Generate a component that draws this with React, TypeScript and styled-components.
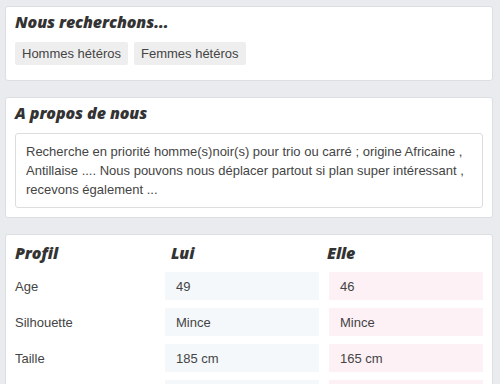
import React from "react";
import styled, { createGlobalStyle } from "styled-components";

const Global = createGlobalStyle`
  html, body { margin: 0; padding: 0; background: #e9ebee; }
  body { font-family: "Liberation Sans", Arial, sans-serif; font-size: 13px; color: #333; }
`;

const Page = styled.div`
  display: flex;
  flex-direction: column;
  gap: 16px;
  padding: 6px 7px 7px 5px;
`;

const Card = styled.section<{ $pt?: number; $pb?: number }>`
  background: #fff;
  border: 1px solid #dcdfe2;
  border-radius: 3px;
  padding: ${(p) => p.$pt ?? 5}px 9px ${(p) => p.$pb ?? 15}px 9px;
`;

const Heading = styled.h2`
  margin: 0;
  font-family: "Open Sans", sans-serif;
  font-style: italic;
  font-weight: 800;
  font-size: 16px;
  line-height: 20px;
  color: #333;
  letter-spacing: -0.1px;
`;

const Tags = styled.div`
  display: flex;
  gap: 6px;
  margin-top: 10px;
`;

const Tag = styled.span`
  background: #eeeeee;
  border-radius: 2px;
  padding: 0 7px;
  height: 23px;
  line-height: 23px;
  color: #444;
`;

const TextBox = styled.div`
  margin-top: 10px;
  border: 1px solid #dddddd;
  border-radius: 3px;
  padding: 8px 10px;
  line-height: 19px;
  color: #444;
`;

const HeadRow = styled.div`
  display: flex;
`;

const HeadCell = styled(Heading)`
  flex: 1;
`;

const Grid = styled.div`
  display: grid;
  grid-template-columns: 140px 154px 154px;
  column-gap: 10px;
  row-gap: 8px;
  margin-top: 9px;
`;

const Label = styled.div`
  display: flex;
  align-items: center;
  height: 28px;
  color: #444;
`;

const Value = styled.div<{ $tone: "him" | "her" }>`
  display: flex;
  align-items: center;
  height: 28px;
  padding: 0 11px;
  background: ${(p) => (p.$tone === "him" ? "#f4f8fb" : "#fdf1f6")};
  color: #444;
`;

const rows = [
  ["Age", "49", "46"],
  ["Silhouette", "Mince", "Mince"],
  ["Taille", "185 cm", "165 cm"],
  ["Poids", "80 kg", "55 kg"],
];

export default function App() {
  return (
    <>
      <Global />
      <Page>
        <Card $pt={5} $pb={15}>
          <Heading>Nous recherchons...</Heading>
          <Tags>
            <Tag>Hommes hétéros</Tag>
            <Tag>Femmes hétéros</Tag>
          </Tags>
        </Card>
        <Card $pt={5} $pb={9}>
          <Heading>A propos de nous</Heading>
          <TextBox>
            Recherche en priorité homme(s)noir(s) pour trio ou carré ; origine Africaine ,
            Antillaise .... Nous pouvons nous déplacer partout si plan super intéressant ,
            recevons également ...
          </TextBox>
        </Card>
        <Card $pt={8} $pb={10}>
          <HeadRow>
            <HeadCell>Profil</HeadCell>
            <HeadCell>Lui</HeadCell>
            <HeadCell>Elle</HeadCell>
          </HeadRow>
          <Grid>
            {rows.map(([label, him, her]) => (
              <React.Fragment key={label}>
                <Label>{label}</Label>
                <Value $tone="him">{him}</Value>
                <Value $tone="her">{her}</Value>
              </React.Fragment>
            ))}
          </Grid>
        </Card>
      </Page>
    </>
  );
}
